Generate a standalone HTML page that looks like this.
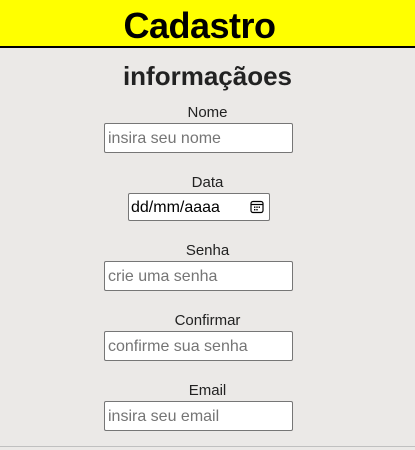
<!DOCTYPE html>
<html><head><meta charset="utf-8"><style>
*{box-sizing:border-box;margin:0;padding:0}
body{width:415px;height:450px;background:#ebe9e7;font-family:"Liberation Sans",sans-serif;position:relative;overflow:hidden}
.hdr{position:absolute;left:0;top:0;width:415px;height:48px;background:#ffff00;border-bottom:2px solid #000;text-align:center}
.hdr h1{font-size:36px;font-weight:bold;line-height:52px;color:#000;letter-spacing:-0.5px;padding-right:16px}
h2{position:absolute;top:61px;left:0;width:415px;text-align:center;font-size:26px;font-weight:bold;color:#222;}
.l{position:absolute;left:0;width:415px;text-align:center;font-size:15px;color:#222}
.i{position:absolute;left:104px;width:189px;height:30px;background:#fff;border:1px solid #767676;border-radius:2px;font-size:16px;color:#757575;padding-left:3px;line-height:29px;white-space:nowrap;overflow:hidden}
.d{position:absolute;left:128px;top:193px;width:142px;height:28px;background:#fff;border:1px solid #767676;border-radius:2px;font-size:16px;color:#000;padding-left:2px;line-height:27px}
.line{position:absolute;left:0;top:446px;width:415px;height:1px;background:#c0c0c0}
</style></head><body>
<div class="hdr"><h1>Cadastro</h1></div>
<h2>informaçãoes</h2>
<div class="l" style="top:104px">Nome</div>
<div class="i" style="top:123px">insira seu nome</div>
<div class="l" style="top:174px">Data</div>
<div class="d">dd/mm/aaaa
<svg style="position:absolute;right:5px;top:6px" width="14" height="14" viewBox="0 0 14 14"><rect x="1" y="1.5" width="12" height="11" rx="2" fill="none" stroke="#000" stroke-width="1.2"/><line x1="1" y1="4.5" x2="13" y2="4.5" stroke="#000" stroke-width="1.2"/><g fill="#000"><rect x="4" y="6.5" width="1.4" height="1.4"/><rect x="6.3" y="6.5" width="1.4" height="1.4"/><rect x="8.6" y="6.5" width="1.4" height="1.4"/><rect x="4" y="9" width="1.4" height="1.4"/><rect x="6.3" y="9" width="1.4" height="1.4"/></g></svg></div>
<div class="l" style="top:242px">Senha</div>
<div class="i" style="top:261px">crie uma senha</div>
<div class="l" style="top:312px">Confirmar</div>
<div class="i" style="top:331px">confirme sua senha</div>
<div class="l" style="top:382px">Email</div>
<div class="i" style="top:401px">insira seu email</div>
<div class="line"></div>
</body></html>
